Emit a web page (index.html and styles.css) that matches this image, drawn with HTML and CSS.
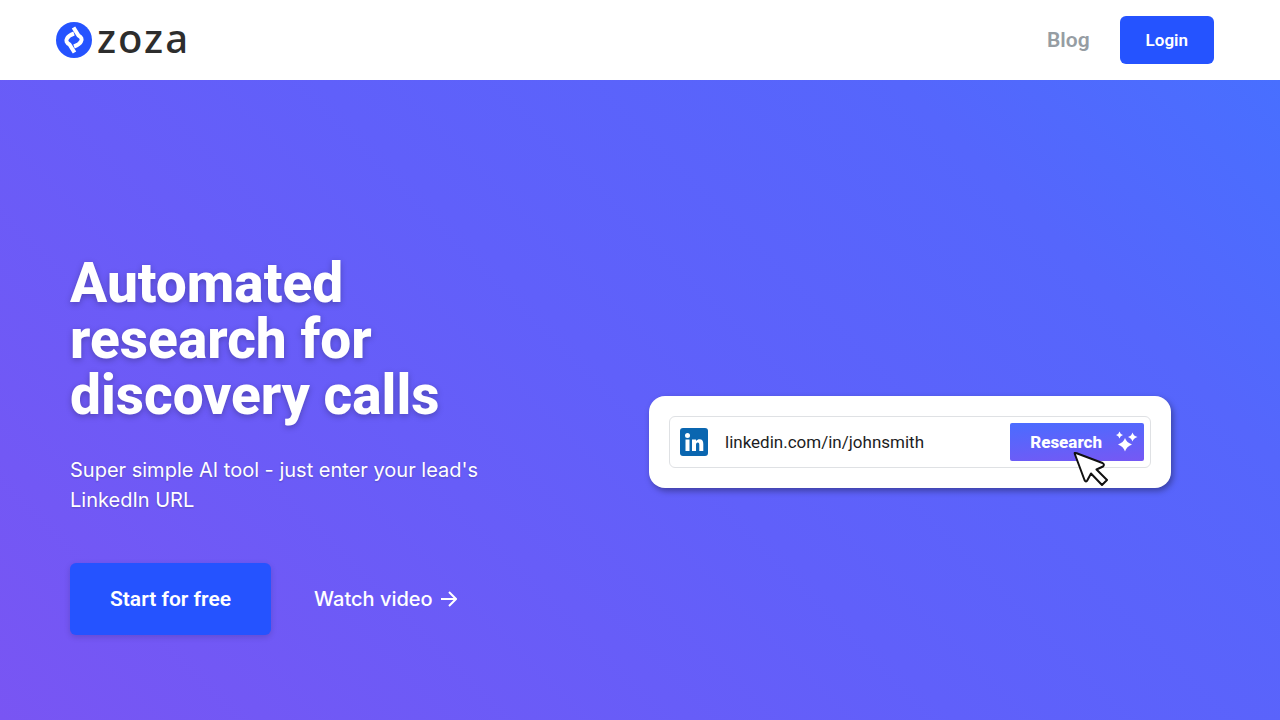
FILE: index.html
```
<!DOCTYPE html>
<html lang="en">
<head>
    <meta charset="UTF-8">
    <meta name="viewport" content="width=device-width, initial-scale=1.0">
    <title>Zoza</title>
    <link rel="stylesheet" href="styles.css">
</head>
<body>
    <header class="navbar">
        <a class="logo" href="#">
            <svg class="logo-mark" viewBox="0 0 36 36" aria-hidden="true">
                <circle cx="18" cy="18" r="18" fill="#2553ff"/>
                <path d="M17.500 5.500 22.500 13.500Q27 16 25 19.500Q23.500 22.500 18 24.500" fill="none" stroke="#fff" stroke-width="4"/>
                <path d="M18.500 30.500 13.500 22.500Q9 20 11 16.500Q12.500 13.500 18 11.500" fill="none" stroke="#fff" stroke-width="4"/>
            </svg>
            <span class="logo-text">zoza</span>
        </a>
        <nav class="nav-links">
            <a class="nav-link" href="#">Blog</a>
            <a class="login" href="#">Login</a>
        </nav>
    </header>
    <main class="hero">
        <section class="hero-copy">
            <h1>Automated research for discovery calls</h1>
            <p>Super simple AI tool - just enter your lead's LinkedIn URL</p>
            <div class="actions">
                <a class="start" href="#">Start for free</a>
                <a class="watch" href="#">Watch video
                    <svg class="arrow" viewBox="0 0 16 16" aria-hidden="true">
                        <path d="M0 8H15M8 1L15 8L8 15" fill="none" stroke="currentColor" stroke-width="2"/>
                    </svg>
                </a>
            </div>
        </section>
        <section class="hero-demo">
            <form class="search-card">
                <div class="search-box">
                    <svg class="linkedin" viewBox="0 0 28 28" aria-hidden="true">
                        <rect width="28" height="28" rx="3" fill="#0a66b0"/>
                        <circle cx="7.500" cy="7.500" r="2.500" fill="#fff"/>
                        <path d="M5.500 11.500h4V23h-4zM12 11.500h4v1.600c1-1.400 2.200-1.900 3.500-1.900 2.800 0 3.800 1.800 3.800 4.800v7h-4v-6.200c0-1.500-.5-2.300-1.600-2.300-1.200 0-1.700.9-1.700 2.400V23h-4z" fill="#fff"/>
                    </svg>
                    <input class="url" type="text" aria-label="LinkedIn URL" value="linkedin.com/in/johnsmith">
                    <button class="research" type="button">Research
                        <svg class="sparkles" viewBox="0 0 22 22" aria-hidden="true">
                            <path d="M9 7Q10.500 11.500 16 13.500Q10.500 15.500 9 20.500Q7.500 15.500 2 13.500Q7.500 11.500 9 7Z"/>
                            <path d="M3.500 0.500Q4.200 3.300 7 4Q4.200 4.700 3.500 7.500Q2.800 4.700 0 4Q2.800 3.300 3.500 0.500Z"/>
                            <path d="M16.500 1.500Q17.500 5 21.500 6Q17.500 7 16.500 10.500Q15.500 7 12 6Q15.500 5 16.500 1.500Z"/>
                        </svg>
                    </button>
                </div>
                <svg class="cursor" viewBox="0 0 36 36" aria-hidden="true">
                    <path d="M3 1Q1 0 2 2.500L11.500 28Q13 31 14.500 28L18 21.500 29 33 34 28 23.500 17.500 30 14.500Q32 12.500 29.500 11Z" fill="#fff" stroke="#111" stroke-width="2" stroke-linejoin="round"/>
                </svg>
            </form>
        </section>
    </main>
</body>
</html>
```

FILE: styles.css
```
* {
    box-sizing: border-box;
}
body {
    margin: 0;
    min-height: 100vh;
    display: flex;
    flex-direction: column;
    font-family: Inter, sans-serif;
    color: #fff;
}
a {
    color: inherit;
    text-decoration: none;
}
.navbar {
    display: flex;
    align-items: center;
    justify-content: space-between;
    height: 80px;
    padding: 0 66px 0 56px;
    background: #fff;
}
.logo {
    display: flex;
    align-items: center;
    gap: 5px;
}
.logo-mark {
    width: 36px;
    height: 36px;
}
.logo-text {
    font-family: "Noto Sans", sans-serif;
    font-size: 40px;
    font-weight: 500;
    line-height: 40px;
    letter-spacing: 2px;
    color: #2d2d2d;
    padding-bottom: 4px;
}
.nav-links {
    display: flex;
    align-items: center;
    gap: 30px;
    font-family: Roboto, sans-serif;
    font-weight: 600;
}
.nav-link {
    font-size: 21px;
    color: #969da3;
}
.login {
    padding: 12px 26px;
    border-radius: 6px;
    background: #2553ff;
    font-size: 17px;
    line-height: 24px;
    color: #fff;
}
.hero {
    flex: 1;
    display: grid;
    grid-template-columns: 1fr 1fr;
    align-items: center;
    padding: 84px 70px 0;
    background: linear-gradient(45deg, #7955f3, #6060fa 50%, #5566fc 80%, #486fff);
}
.hero-copy {
    max-width: 440px;
    padding-top: 6px;
}
h1 {
    margin: 0;
    font-family: Roboto, sans-serif;
    font-size: 55px;
    font-weight: 800;
    line-height: 56px;
    text-shadow: 0 2px 6px rgba(0, 0, 0, 0.25);
}
.hero-copy p {
    margin: 32px 0 48px;
    font-size: 20px;
    line-height: 30px;
    text-shadow: 0 1px 2px rgba(0, 0, 0, 0.2);
}
.actions {
    display: flex;
    align-items: center;
    gap: 43px;
    font-size: 20px;
    font-weight: 500;
    line-height: 24px;
}
.start {
    padding: 24px 40px;
    border-radius: 6px;
    background: #2553ff;
    font-family: Roboto, sans-serif;
    font-size: 21px;
    font-weight: 600;
    box-shadow: 0 2px 6px rgba(0, 0, 0, 0.15);
}
.watch {
    display: flex;
    align-items: center;
    gap: 8px;
}
.arrow {
    width: 16px;
    height: 16px;
}
.hero-demo {
    padding: 0 39px 0 9px;
}
.search-card {
    position: relative;
    padding: 20px;
    border-radius: 16px;
    background: #fff;
    box-shadow: 2px 3px 6px rgba(0, 0, 0, 0.35);
}
.search-box {
    display: flex;
    align-items: center;
    padding: 6px 6px 6px 10px;
    border: 1px solid #dfe1e4;
    border-radius: 6px;
}
.linkedin {
    width: 28px;
    height: 28px;
}
.url {
    flex: 1;
    min-width: 0;
    padding: 0 17px;
    border: 0;
    outline: 0;
    background: none;
    font-family: Roboto, sans-serif;
    font-size: 17px;
    color: #1c1c22;
}
.research {
    display: flex;
    align-items: center;
    gap: 14px;
    height: 38px;
    padding: 0 6px 0 20px;
    border: 0;
    border-radius: 2px;
    background: linear-gradient(175deg, #4a6cff, #7658f4);
    font-family: Roboto, sans-serif;
    font-size: 17px;
    font-weight: 800;
    color: #fff;
}
.sparkles {
    width: 22px;
    height: 22px;
    fill: #fff;
}
.cursor {
    position: absolute;
    right: 62px;
    bottom: 0;
    width: 36px;
    height: 36px;
}
```
